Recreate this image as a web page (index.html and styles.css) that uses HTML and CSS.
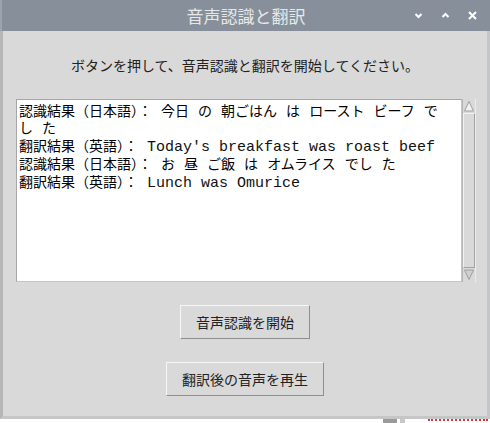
FILE: index.html
```html
<!DOCTYPE html>
<html lang="ja">
<head>
<meta charset="utf-8">
<title>音声認識と翻訳</title>
<link rel="stylesheet" href="styles.css">
</head>
<body>
<div class="window">
  <div class="titlebar">
    <span></span>
    <div class="title">音声認識と翻訳</div>
    <div class="controls">
      <svg class="ctl" width="9" height="9" viewBox="0 0 9 9"><path d="M1.5 3 L4.5 6 L7.5 3" fill="none" stroke="#ffffff" stroke-width="2"/></svg>
      <svg class="ctl" width="9" height="9" viewBox="0 0 9 9"><path d="M1.5 6 L4.5 3 L7.5 6" fill="none" stroke="#ffffff" stroke-width="2"/></svg>
      <svg class="ctl" width="9" height="9" viewBox="0 0 9 9"><path d="M1 1 L8 8 M8 1 L1 8" fill="none" stroke="#ffffff" stroke-width="2"/></svg>
    </div>
  </div>
  <div class="client">
    <p class="prompt">ボタンを押して、音声認識と翻訳を開始してください。</p>
    <div class="textwrap">
      <div class="textbox">
        <div class="line">認識結果（日本語）： 今日 の 朝ごはん は ロースト ビーフ で し た</div>
        <div class="line">翻訳結果（英語）：<span class="en"> Today's breakfast was roast beef</span></div>
        <div class="line">認識結果（日本語）： お 昼 ご飯 は オムライス でし た</div>
        <div class="line">翻訳結果（英語）：<span class="en"> Lunch was Omurice</span></div>
      </div>
      <div class="scrollbar">
        <div class="arrow">
          <svg width="12" height="12" viewBox="0 0 12 12"><path d="M6 1.5 L10.5 11 L1.5 11 Z" fill="#f0f0f0" stroke="#a0a0a0" stroke-width="1"/></svg>
        </div>
        <div class="slider"></div>
        <div class="arrow">
          <svg width="12" height="12" viewBox="0 0 12 12"><path d="M6 10.5 L10.5 1 L1.5 1 Z" fill="#d0d0d0" stroke="#a0a0a0" stroke-width="1"/></svg>
        </div>
      </div>
    </div>
    <button class="btn">音声認識を開始</button>
    <button class="btn">翻訳後の音声を再生</button>
  </div>
</div>
<div class="desktop">
  <span class="dk-gray"></span>
  <span class="dk-gray small"></span>
  <span class="dk-red"></span>
</div>
</body>
</html>
```
FILE: styles.css
```css
* { box-sizing: border-box; }
html, body {
  margin: 0;
  padding: 0;
  background: #ffffff;
}
body {
  width: 490px;
  height: 423px;
  overflow: hidden;
  font-family: "Noto Sans CJK JP", "DejaVu Sans", sans-serif;
}
.window {
  width: 490px;
  height: 419px;
  display: flex;
  flex-direction: column;
}
.titlebar {
  height: 31px;
  flex: none;
  background: #87909a;
  border-left: 2px solid #9ba3ab;
  display: grid;
  grid-template-columns: 1fr auto 1fr;
  align-items: center;
}
.title {
  color: #e6e8ea;
  font-size: 17px;
  line-height: 31px;
}
.controls {
  justify-self: end;
  display: flex;
  gap: 18px;
  padding-right: 13px;
  align-items: center;
}
.ctl { display: block; }
.client {
  flex: 1;
  background: #d9d9d9;
  border-left: 3px solid #b4b6b8;
  border-right: 3px solid #c4c6c8;
  border-bottom: 3px solid #c4c6c8;
  display: flex;
  flex-direction: column;
  align-items: center;
}
.prompt {
  margin: 24px 0 0 0;
  font-size: 14px;
  line-height: 20px;
  color: #222222;
}
.textwrap {
  margin-top: 24px;
  align-self: flex-start;
  margin-left: 13px;
  width: 460px;
  height: 183px;
  display: flex;
}
.textbox {
  width: 446px;
  background: #ffffff;
  border-top: 1px solid #a6a6a6;
  border-left: 1px solid #a6a6a6;
  border-bottom: 1px solid #c6c6c6;
  border-right: 1px solid #c6c6c6;
  padding: 3px 2px 0 2px;
  font-family: "DejaVu Sans Mono", "Noto Sans CJK JP", monospace;
  font-size: 14px;
  line-height: 17.4px;
  word-spacing: 0.6px;
  color: #000000;
  overflow: hidden;
}
.line { line-height: 17.4px; }
.en {
  font-family: "Liberation Mono", "DejaVu Sans Mono", monospace;
  font-size: 15px;
  line-height: 17.4px;
  word-spacing: 0;
  color: #111111;
}
.scrollbar {
  width: 14px;
  display: flex;
  flex-direction: column;
  background: #d9d9d9;
  border-left: 1px solid #b5b5b5;
  border-right: 1px solid #ececec;
}
.arrow {
  height: 14px;
  display: flex;
  align-items: center;
  justify-content: center;
}
.slider {
  flex: 1;
  border-top: 1px solid #f2f2f2;
  border-left: 1px solid #f2f2f2;
  border-bottom: 1px solid #a3a3a3;
  border-right: 1px solid #a3a3a3;
  background: #d9d9d9;
}
.btn {
  height: 34px;
  padding: 0 15px;
  background: #d9d9d9;
  border-top: 1px solid #f6f6f6;
  border-left: 1px solid #f6f6f6;
  border-bottom: 1px solid #8f8f8f;
  border-right: 1px solid #8f8f8f;
  font-family: "Noto Sans CJK JP", sans-serif;
  font-size: 14px;
  color: #222222;
  margin-top: 23px;
  line-height: 20px;
}
.desktop {
  height: 4px;
  display: flex;
  gap: 3px;
  padding-left: 383px;
}
.dk-gray { width: 14px; height: 4px; background: #9a9a9a; }
.dk-gray.small { width: 5px; background: #c8c8c8; }
.dk-red { width: 60px; height: 3px; margin-left: 20px; border-top: 2px dotted #e03030; }
```
